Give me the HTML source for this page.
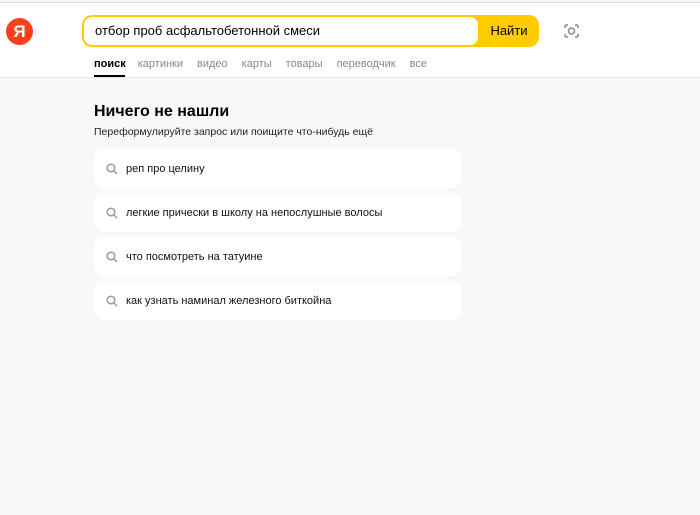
<!DOCTYPE html>
<html><head><meta charset="utf-8"><style>
*{margin:0;padding:0;box-sizing:border-box}
body{width:700px;height:515px;background:#f8f8f8;font-family:"Liberation Sans",Arial,sans-serif;position:relative;overflow:hidden}
.hdr{position:absolute;left:0;top:2px;width:700px;height:76px;background:#fff;border-top:1px solid #ddd;border-bottom:1px solid #e6e6e6}
.logo{position:absolute;left:6px;top:15px;width:27px;height:27px;border-radius:50%;background:#fc3f1d;color:#fff;font-weight:bold;font-size:17px;text-align:center;line-height:27px}
.sb{position:absolute;left:82px;top:12px;width:457px;height:32px;border-radius:10px;background:#ffcc00}
.inp{position:absolute;left:2px;top:2px;width:394px;height:28px;background:#fff;border-radius:8px;font-size:13px;line-height:28px;padding-left:11px;color:#000}
.btn{position:absolute;right:0;top:0;width:60px;height:32px;font-size:13px;line-height:32px;text-align:center;color:#000}
.tabs{position:absolute;left:94px;top:58px;font-size:11px;color:#888}
.tabs span{margin-right:14px}
.tabs b{color:#000;margin-right:12px}
.ul{position:absolute;left:94px;top:75px;width:31px;height:2px;background:#000}
h1{position:absolute;left:94px;top:103px;font-size:16px;font-weight:bold;color:#000}
.sub{position:absolute;left:94px;top:126px;font-size:10.5px;color:#222}
.c{position:absolute;left:94px;width:367px;height:39px;background:#fff;border-radius:10px;font-size:11px;color:#111;line-height:41px;padding-left:32px}
.c svg{position:absolute;left:12px;top:14px}
</style></head><body>
<div class="hdr">
<div class="logo">Я</div>
<div class="sb"><div class="inp">отбор проб асфальтобетонной смеси</div><div class="btn">Найти</div></div>
<svg style="position:absolute;left:563px;top:20px" width="17" height="16" viewBox="0 0 17 16" fill="none" stroke="#888" stroke-width="1.5"><path d="M2 5V3.5Q2 2 3.5 2H5M12 2h1.5Q15 2 15 3.5V5M15 11v1.5Q15 14 13.5 14H12M5 14H3.5Q2 14 2 12.5V11"/><circle cx="8.5" cy="8" r="3"/></svg>
</div>
<div class="tabs"><b>поиск</b><span>картинки</span><span>видео</span><span>карты</span><span>товары</span><span>переводчик</span><span>все</span></div>
<div class="ul"></div>
<h1>Ничего не нашли</h1>
<div class="sub">Переформулируйте запрос или поищите что-нибудь ещё</div>
<div class="c" style="top:149px"><svg width="12" height="12" viewBox="0 0 12 12" fill="none" stroke="#999" stroke-width="1.5"><circle cx="5" cy="5" r="3.8"/><path d="M8 8l3 3"/></svg>реп про целину</div>
<div class="c" style="top:193px"><svg width="12" height="12" viewBox="0 0 12 12" fill="none" stroke="#999" stroke-width="1.5"><circle cx="5" cy="5" r="3.8"/><path d="M8 8l3 3"/></svg>легкие прически в школу на непослушные волосы</div>
<div class="c" style="top:237px"><svg width="12" height="12" viewBox="0 0 12 12" fill="none" stroke="#999" stroke-width="1.5"><circle cx="5" cy="5" r="3.8"/><path d="M8 8l3 3"/></svg>что посмотреть на татуине</div>
<div class="c" style="top:281px"><svg width="12" height="12" viewBox="0 0 12 12" fill="none" stroke="#999" stroke-width="1.5"><circle cx="5" cy="5" r="3.8"/><path d="M8 8l3 3"/></svg>как узнать наминал железного биткойна</div>
</body></html>
